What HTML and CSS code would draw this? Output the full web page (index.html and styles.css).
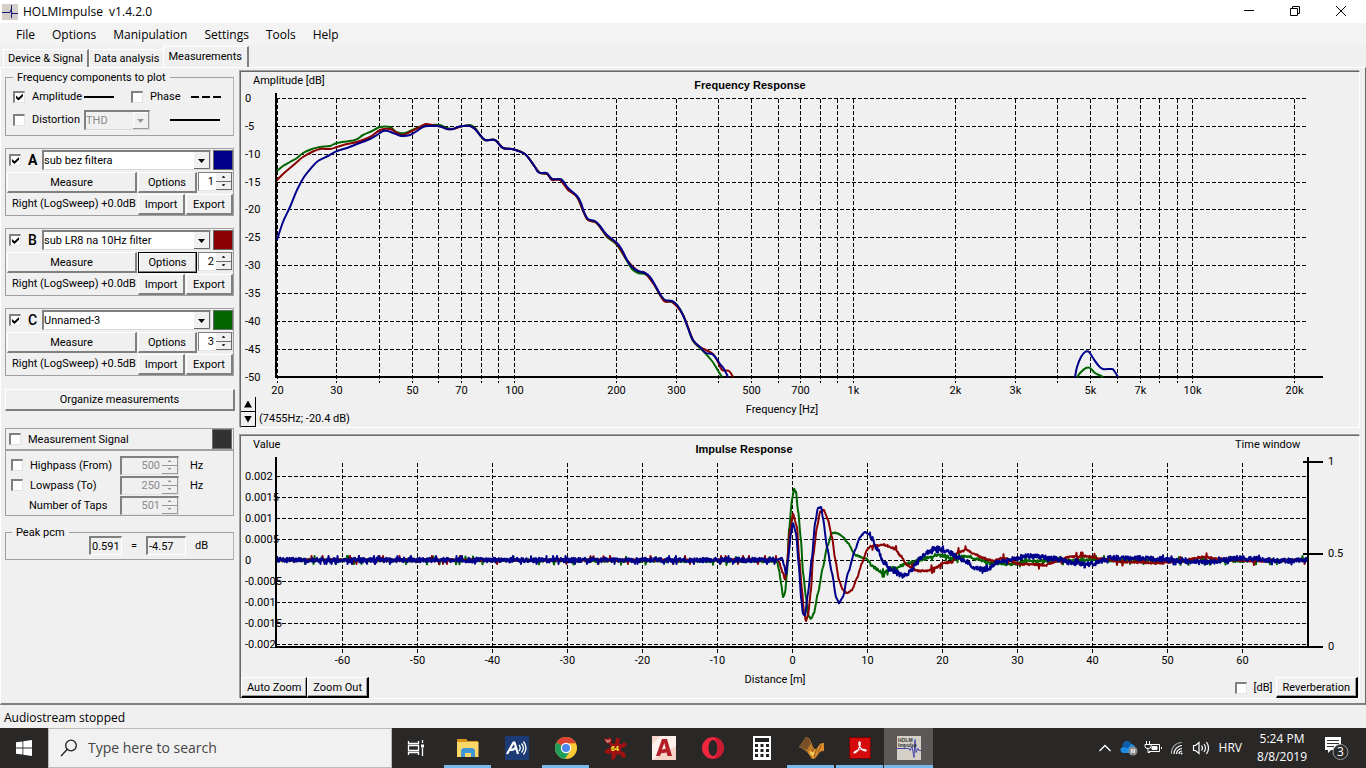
FILE: index.html
```html
<!DOCTYPE html>
<html lang="en">
  <head>
    <meta charset="UTF-8" />
    <meta name="viewport" content="width=device-width, initial-scale=1.0" />
    <title>HOLMImpulse</title>
    <link rel="stylesheet" href="styles.css">
  </head>
  <body>
    <header class="titlebar">
      <svg class="app-icon" width="16" height="16" viewBox="0 0 16 16">
        <rect width="16" height="16" fill="#d4d0c8" />
        <path d="M0 8.5h8l1-3 1 4h6M9.500 1v13" fill="none" stroke="#1a1a80" />
      </svg>
      <span class="title">HOLMImpulse&nbsp; v1.4.2.0</span>
      <button type="button" class="win-btn" aria-label="Minimize">
        <svg width="12" height="12"><path d="M1 4.500h10" stroke="#000" /></svg>
      </button>
      <button type="button" class="win-btn" aria-label="Restore">
        <svg width="12" height="12" fill="none" stroke="#000"><path d="M1.500 2.500h7v7h-7zM3.500 2.500v-2h7v7h-2" /></svg>
      </button>
      <button type="button" class="win-btn" aria-label="Close">
        <svg width="12" height="12"><path d="M1 0l10 10M11 0L1 10" stroke="#000" /></svg>
      </button>
    </header>

    <nav class="menubar">
      <button type="button">File</button>
      <button type="button">Options</button>
      <button type="button">Manipulation</button>
      <button type="button">Settings</button>
      <button type="button">Tools</button>
      <button type="button">Help</button>
    </nav>

    <div class="tabs" role="tablist">
      <button type="button" class="tab" role="tab">Device &amp; Signal</button>
      <button type="button" class="tab" role="tab">Data analysis</button>
      <button type="button" class="tab active" role="tab">Measurements</button>
    </div>

    <main class="page">
      <aside class="sidebar">
        <fieldset class="group components">
          <legend>Frequency components to plot</legend>
          <div class="row">
            <label class="check"><input type="checkbox" checked />Amplitude</label>
            <span class="line short"></span>
            <label class="check phase"><input type="checkbox" />Phase</label>
            <span class="line dashed"></span>
          </div>
          <div class="row">
            <label class="check"><input type="checkbox" />Distortion</label>
            <select class="combo thd" aria-label="Distortion type" disabled><option>THD</option></select>
            <span class="line long"></span>
          </div>
        </fieldset>

        <section class="channel">
          <div class="channel-head">
            <label class="check"><input type="checkbox" checked /><b>A</b></label>
            <select class="combo" aria-label="Measurement A"><option>sub bez filtera</option></select>
            <button type="button" class="swatch blue" aria-label="Color A"></button>
          </div>
          <div class="channel-row">
            <button type="button" class="btn measure">Measure</button>
            <button type="button" class="btn options">Options</button>
            <span class="spin">
              <input type="number" value="1" aria-label="Slot A" />
              <span class="spin-btns"><button type="button" class="up" aria-label="Up"></button><button type="button" class="down" aria-label="Down"></button></span>
            </span>
          </div>
          <div class="channel-row">
            <span class="info">Right (LogSweep) +0.0dB</span>
            <button type="button" class="btn io">Import</button>
            <button type="button" class="btn io">Export</button>
          </div>
        </section>

        <section class="channel">
          <div class="channel-head">
            <label class="check"><input type="checkbox" checked /><span class="letter">B</span></label>
            <select class="combo" aria-label="Measurement B"><option>sub LR8 na 10Hz filter</option></select>
            <button type="button" class="swatch red" aria-label="Color B"></button>
          </div>
          <div class="channel-row">
            <button type="button" class="btn measure">Measure</button>
            <button type="button" class="btn options focused">Options</button>
            <span class="spin">
              <input type="number" value="2" aria-label="Slot B" />
              <span class="spin-btns"><button type="button" class="up" aria-label="Up"></button><button type="button" class="down" aria-label="Down"></button></span>
            </span>
          </div>
          <div class="channel-row">
            <span class="info">Right (LogSweep) +0.0dB</span>
            <button type="button" class="btn io">Import</button>
            <button type="button" class="btn io">Export</button>
          </div>
        </section>

        <section class="channel">
          <div class="channel-head">
            <label class="check"><input type="checkbox" checked /><span class="letter">C</span></label>
            <select class="combo" aria-label="Measurement C"><option>Unnamed-3</option></select>
            <button type="button" class="swatch green" aria-label="Color C"></button>
          </div>
          <div class="channel-row">
            <button type="button" class="btn measure">Measure</button>
            <button type="button" class="btn options">Options</button>
            <span class="spin">
              <input type="number" value="3" aria-label="Slot C" />
              <span class="spin-btns"><button type="button" class="up" aria-label="Up"></button><button type="button" class="down" aria-label="Down"></button></span>
            </span>
          </div>
          <div class="channel-row">
            <span class="info">Right (LogSweep) +0.5dB</span>
            <button type="button" class="btn io">Import</button>
            <button type="button" class="btn io">Export</button>
          </div>
        </section>

        <button type="button" class="btn organize">Organize measurements</button>

        <div class="signal-head">
          <label class="check"><input type="checkbox" />Measurement Signal</label>
          <button type="button" class="swatch dark" aria-label="Signal color"></button>
        </div>
        <div class="filters">
          <div class="filter">
            <label class="check"><input type="checkbox" />Highpass (From)</label>
            <span class="spin off">
              <input type="number" value="500" aria-label="Highpass frequency" disabled />
              <span class="spin-btns"><button type="button" class="up" aria-label="Up" disabled></button><button type="button" class="down" aria-label="Down" disabled></button></span>
            </span>
            <span>Hz</span>
          </div>
          <div class="filter">
            <label class="check"><input type="checkbox" />Lowpass (To)</label>
            <span class="spin off">
              <input type="number" value="250" aria-label="Lowpass frequency" disabled />
              <span class="spin-btns"><button type="button" class="up" aria-label="Up" disabled></button><button type="button" class="down" aria-label="Down" disabled></button></span>
            </span>
            <span>Hz</span>
          </div>
          <div class="filter">
            <label class="taps" for="taps">Number of Taps</label>
            <span class="spin off">
              <input type="number" id="taps" value="501" disabled />
              <span class="spin-btns"><button type="button" class="up" aria-label="Up" disabled></button><button type="button" class="down" aria-label="Down" disabled></button></span>
            </span>
          </div>
        </div>

        <fieldset class="group peak">
          <legend>Peak pcm</legend>
          <div class="peak-row">
            <input type="text" class="peak-lin" value="0.591" aria-label="Peak linear" readonly />
            <span>=</span>
            <input type="text" class="peak-db" value="-4.57" aria-label="Peak dB" readonly />
            <span>dB</span>
          </div>
        </fieldset>
      </aside>

      <div class="charts">
        <section class="panel">
          <svg id="freq-chart" class="chart" viewBox="241 72 1118 325"></svg>
          <div class="freq-bar">
            <span class="zoom-btns">
              <button type="button" class="up" aria-label="Zoom in"></button>
              <button type="button" class="down" aria-label="Zoom out"></button>
            </span>
            <span class="cursor-pos">(7455Hz; -20.4 dB)</span>
          </div>
        </section>
        <section class="panel">
          <svg id="impulse-chart" class="chart" viewBox="241 436 1118 241"></svg>
          <div class="impulse-bar">
            <button type="button" class="btn dark-edge auto">Auto Zoom</button>
            <button type="button" class="btn dark-edge">Zoom Out</button>
            <label class="check db"><input type="checkbox" />[dB]</label>
            <button type="button" class="btn dark-edge reverb">Reverberation</button>
          </div>
        </section>
      </div>
    </main>

    <div class="statusbar">Audiostream stopped</div>

    <footer class="taskbar">
      <button type="button" class="start" aria-label="Start">
        <svg width="16" height="16" fill="#fff"><path d="M0 2.300L6.500 1.400v6.200H0zM7.300 1.300L16 0v7.600H7.300zM0 8.400h6.500v6.200L0 13.700zM7.300 8.400H16V16l-8.700-1.300z" /></svg>
      </button>
      <div class="search">
        <svg width="18" height="18" fill="none" stroke="#222" stroke-width="1.300"><circle cx="11" cy="6.500" r="5.300" /><path d="M7.300 10.300L1 17" /></svg>
        <input type="text" placeholder="Type here to search" aria-label="Search" />
      </div>
      <button type="button" class="task view" aria-label="Task View">
        <svg width="18" height="16" fill="none" stroke="#fff" stroke-width="1.300"><path d="M1.500 1v2.500h10V1M1.500 15v-2.500h10V15M1.500 5.500h10v5h-10zM15.500 0v3M15.500 8v8" /><path d="M14 4.500h3v3h-3z" fill="#fff" stroke="none" /></svg>
      </button>
      <button type="button" class="task open" aria-label="File Explorer">
        <svg width="24" height="24" viewBox="0 0 24 24"><path d="M1 3h9l2 2h10v16H1z" fill="#d9961a" /><path d="M1 6h21.500v15H1z" fill="#fbd768" /><path d="M5 21v-7l2-2h10l2 2v7h-4v-4H9v4z" fill="#4096d4" /></svg>
      </button>
      <button type="button" class="task" aria-label="Audio tool">
        <svg width="24" height="24" viewBox="0 0 24 24"><rect width="24" height="24" fill="#1c3b74" /><g fill="none" stroke="#fff"><path d="M2 18L8.500 6.500h1L13 18M5 14c3 0 5-1 6-3" stroke-width="2.200" /><path d="M14 9q2.500 3 0 6M16.500 7.500q4 4.500 0 9M18.500 5.500q5 6.500 0 13" stroke-width="1.300" /></g></svg>
      </button>
      <button type="button" class="task open" aria-label="Chrome">
        <svg width="24" height="24" viewBox="0 0 24 24"><circle cx="12" cy="12" r="11" fill="#fbc935" /><path d="M12 12L2.500 6.500A11 11 0 0 1 21.900 7.200H12z" fill="#dd4236" /><path d="M12 12L2.500 6.500A11 11 0 0 0 11 23l5.200-8.600z" fill="#1f9d59" /><circle cx="12" cy="12" r="5.200" fill="#fff" /><circle cx="12" cy="12" r="4" fill="#4a86ec" /></svg>
      </button>
      <button type="button" class="task" aria-label="Irfan 64">
        <svg width="24" height="24" viewBox="0 0 24 24"><path d="M1 2l3 1 3-2 2 3-1 3 4 1 1-6h3l1 2-1 4h3l2-2 3 2-2 3-4 1v3l4 2 1 4-3 1-4-4-3 1-1 4-3 1-1-3 1-4-3 1-4-1v-3l6-3-2-3-4-2z" fill="#9c1111" /><path d="M2 3l3 1 3-1-1 3-3 1z" fill="#c9827c" /><text x="12" y="15" class="badge64">64</text></svg>
      </button>
      <button type="button" class="task" aria-label="AutoCAD">
        <svg width="24" height="24" viewBox="0 0 24 24"><rect width="24" height="24" fill="#fbf0ec" /><path d="M0 8l9-8H0zM0 24h24V10z" fill="#f5d3c8" /><path d="M4 20L10 3h5l5 17h-4.500l-1-3.500-5.500 1L8 20zM10 13.500l3.700-.8L12.300 7z" fill="#b51e27" /></svg>
      </button>
      <button type="button" class="task" aria-label="Opera">
        <svg width="24" height="24" viewBox="0 0 24 24"><circle cx="12" cy="12" r="11" fill="#f0263c" /><path d="M12 1a11 11 0 0 1 0 22c7-3 7-19 0-22z" fill="#a70d24" fill-opacity=".5" /><ellipse cx="12" cy="12" rx="4.500" ry="8" fill="#292827" /></svg>
      </button>
      <button type="button" class="task" aria-label="Calculator">
        <svg width="18" height="24" viewBox="0 0 18 24"><rect width="18" height="24" fill="#fff" /><path d="M2 2h14v4H2z" fill="#222" /><path d="M2 9.500h14M2 14.500h14M2 19.500h14" stroke="#222" stroke-width="3" stroke-dasharray="3 2.500" /></svg>
      </button>
      <button type="button" class="task open" aria-label="Signal plot">
        <svg width="26" height="24" viewBox="0 0 26 24"><path d="M1 11L8 1l3 1c3 4 4 12 7 11 2-1 3-7 8-6v8c-4 0-5 2-7 5-3 4-5 4-7 0-3-5-6-7-11-9z" fill="#d98a2c" /><path d="M1 11L8 1l3 1 2 5-4 7z" fill="#76522e" /><path d="M3 9l7 7M5 7l7 8M7 4l7 11M9 2l7 12M15 13l-2 8M19 12l-3 9M23 9l-3 8" stroke="#7d4b1b" stroke-width=".7" fill="none" /><path d="M12 13c1 4 3 4 5 2l-2 6-3-3z" fill="#f3ca4f" /></svg>
      </button>
      <button type="button" class="task open" aria-label="Acrobat Reader">
        <svg width="22" height="22" viewBox="0 0 22 22"><rect width="22" height="22" rx="1" fill="#710608" /><rect x="1" y="1" width="20" height="20" fill="#d30b0d" /><path d="M5 16c-1-2 9-5 12-3 1 2-4 1-6-3-2-3-1-6 0-5 1 2-2 11-6 11z" fill="none" stroke="#fff" stroke-width="1.200" /></svg>
      </button>
      <button type="button" class="task open current" aria-label="HOLMImpulse">
        <svg width="24" height="24" viewBox="0 0 24 24"><rect width="24" height="24" fill="#d4d0c8" /><path d="M0 12.500h12l1 2 2-4 2 11 1-18 1 13 2-4 1 2h2" fill="none" stroke="#4545a8" /><text x="1" y="6" class="holm">HOLM</text><text x="1" y="11" class="holm">Impulse</text></svg>
      </button>

      <div class="tray">
        <svg width="24" height="20"><path d="M6.500 13l5.500-5.500 5.500 5.500" fill="none" stroke="#fff" stroke-width="1.300" /></svg>
        <svg width="24" height="20"><path d="M7 15a3 3 0 0 1-1-6 4 4 0 0 1 8-3 4 4 0 0 1 4 5v4z" fill="#1a8ae2" /><path d="M6 9a4 4 0 0 1 8-3l-3 4z" fill="#0a5ba8" /><circle cx="16" cy="13" r="4.500" fill="#8c8c8c" /><path d="M14.800 11v4M17.200 11v4" stroke="#fff" stroke-width="1.300" /></svg>
        <svg width="24" height="20" fill="none" stroke="#fff"><path d="M10 6.500h8.500v7H8M20.500 9v2M5.500 3v3M8.500 3v3M4 6.500h6v2q0 2-3 2t-3-2zM7 11v3.500h2" /><path d="M11 8.500h5v3h-5z" fill="#fff" /></svg>
        <svg width="24" height="20" fill="none" stroke="#fff" stroke-width="1.200"><path d="M6.500 16A10.500 10.500 0 0 1 17 4.500" opacity=".6" /><path d="M9 16a8.500 8.500 0 0 1 8-8.500M11.500 16a6 6 0 0 1 5.500-5.500M14 16a3 3 0 0 1 3-3" /><circle cx="16.500" cy="15.500" r="1" fill="#fff" stroke="none" /></svg>
        <svg width="24" height="20" fill="none" stroke="#fff" stroke-width="1.200"><path d="M4.500 7.500h2l3.500-3v11l-3.500-3h-2zM12.500 7.500q2 2.500 0 5M15 6q3 4 0 8M17.500 4q4 6 0 12" /></svg>
        <span class="lang">HRV</span>
        <div class="clock"><span>5:24 PM</span><span>8/8/2019</span></div>
        <svg class="notify" width="26" height="26" viewBox="0 0 26 26"><path d="M1 2h16v13H7l-3 3v-3H1z" fill="#fff" /><path d="M3 5.500h12M3 8.500h12M3 11.500h7" stroke="#333" /><circle cx="16.500" cy="17" r="7.500" fill="#2b2a2a" stroke="#999" /><text x="16.500" y="21">3</text></svg>
      </div>
    </footer>

    <script src="script.js"></script>
  </body>
</html>
```

FILE: styles.css
```css
* {
  box-sizing: border-box;
}
body {
  margin: 0;
  min-height: 100vh;
  display: flex;
  flex-direction: column;
  background: #f0f0f0;
  color: #000;
  font: 11px/13px Roboto, "Liberation Sans", sans-serif;
}
button,
input,
select {
  font: inherit;
  color: inherit;
  margin: 0;
  padding: 0;
  border: none;
  border-radius: 0;
  background: none;
}
svg {
  flex: none;
}

/* title, menu, tabs */
.titlebar {
  display: flex;
  align-items: center;
  height: 23px;
  padding: 0 2px;
  background: #fff;
  font: 12px/16px "Open Sans", "Noto Sans", sans-serif;
}
.title {
  flex: 1;
  margin-left: 5px;
}
.win-btn {
  display: flex;
  justify-content: center;
  align-items: center;
  width: 46px;
  height: 22px;
}
.menubar {
  display: flex;
  gap: 1px;
  height: 23px;
  padding: 0 8px;
  background: #f3f3f3;
  font: 12px/16px "Open Sans", "Noto Sans", sans-serif;
}
.menubar button {
  padding: 0 8px;
}
.tabs {
  display: flex;
  align-items: flex-end;
  height: 21px;
  padding: 0 3px;
}
.tab {
  height: 18px;
  padding: 0 4px;
  white-space: nowrap;
  border-left: 1px solid #fff;
  border-top: 1px solid #fff;
  border-right: 2px solid #808080;
}
.tab + .tab {
  border-right-width: 0;
}
.tab.active {
  height: 21px;
  padding: 0 5px 2px 4px;
  border-right: 2px solid #808080;
}

/* page */
.page {
  flex: 1;
  display: flex;
  border: 1px solid #fff;
  border-right: 1px solid #696969;
  border-bottom: 2px solid #808080;
}
.sidebar {
  flex: none;
  display: flex;
  flex-direction: column;
  width: 239px;
  padding: 3px 6px 0 4px;
}
.group {
  margin: 0;
  border: 1px solid #a0a0a0;
  border-right-color: #b0b0b0;
}
.group legend {
  padding: 0 4px;
}
.components {
  height: 65px;
  padding: 1px 7px;
}
.row {
  display: flex;
  align-items: center;
  height: 23px;
}
.check {
  display: flex;
  align-items: center;
  gap: 7px;
  white-space: nowrap;
}
.row .check {
  width: 71px;
}
.row .phase {
  width: 60px;
  margin-left: 17px;
}
.check input {
  appearance: none;
  flex: none;
  display: grid;
  place-items: center;
  width: 12px;
  height: 12px;
  background: #fff;
  border: 1px solid #808080;
  border-top-width: 2px;
  border-left-width: 2px;
  border-right-color: #e3e3e3;
  border-bottom-color: #e3e3e3;
}
.check input:checked::before {
  content: "";
  width: 7px;
  height: 7px;
  background: #000;
  clip-path: polygon(0 28%, 36% 60%, 100% 0, 100% 40%, 36% 100%, 0 68%);
}
.line {
  height: 2px;
  background: #000;
}
.short {
  width: 30px;
}
.long {
  width: 50px;
  margin-left: 20px;
}
.dashed {
  width: 30px;
  background: repeating-linear-gradient(90deg, #000 0 8px, transparent 8px 11px);
}
.combo {
  appearance: none;
  flex: 1;
  min-width: 0;
  height: 20px;
  border: 2px solid #808080;
  border-right: 1px solid #d8d8d8;
  border-bottom: 1px solid #d8d8d8;
  background: #fff url("data:image/svg+xml,%3Csvg xmlns='http://www.w3.org/2000/svg' width='16' height='17'%3E%3Cpath fill='%23f0f0f0' d='M0 0h16v17H0z'/%3E%3Cpath d='M15.500 0v16.500H0' fill='none' stroke='%23696969'/%3E%3Cpath d='M4 7h7l-3.500 4z'/%3E%3C/svg%3E") right top no-repeat;
}
.thd {
  flex: none;
  width: 66px;
  color: #8a8a8a;
  opacity: 1;
  background: #f0f0f0 url("data:image/svg+xml,%3Csvg xmlns='http://www.w3.org/2000/svg' width='16' height='17'%3E%3Cpath fill='%23f0f0f0' d='M0 0h16v17H0z'/%3E%3Cpath d='M.5 17V.5H16' fill='none' stroke='%23fff'/%3E%3Cpath d='M15.500 0v16.500H0' fill='none' stroke='%23999'/%3E%3Cpath fill='%23999' d='M4 7h7l-3.500 4z'/%3E%3C/svg%3E") right top no-repeat;
}

/* measurement channels */
.channel {
  display: flex;
  flex-direction: column;
  gap: 1px;
  height: 68px;
  margin-top: 12px;
  padding: 1px 0 0 1px;
  border: 1px solid #a0a0a0;
}
.channel-head {
  display: flex;
  gap: 2px;
  height: 21px;
}
.channel-head .check {
  width: 33px;
  height: 20px;
  padding-left: 2px;
}
.channel-head b,
.letter {
  font-size: 14px;
}
.letter {
  font-weight: 500;
}
.swatch {
  width: 20px;
  height: 20px;
  border: 1px solid #696969;
}
.blue {
  background: #00008b;
}
.red {
  background: #8b0000;
}
.green {
  background: #006400;
}
.dark {
  background: #323232;
}
.channel-row {
  display: flex;
  gap: 1px;
  height: 21px;
}
.btn {
  border: 1px solid #fff;
  border-right: 2px solid #808080;
  border-bottom: 2px solid #808080;
  background: #f0f0f0;
  white-space: nowrap;
}
.measure {
  flex: 1;
}
.options {
  width: 59px;
}
.focused {
  border: 1px solid #000;
  box-shadow: inset -1px -1px 0 #808080, inset 1px 1px 0 #fff;
}
.info {
  flex: 1;
  padding: 3px 0 0 5px;
  white-space: nowrap;
}
.io {
  width: 47px;
}
.spin {
  display: flex;
  width: 35px;
  height: 19px;
  background: #fff;
  border: 1px solid #808080;
  border-right-color: #e3e3e3;
  border-bottom-color: #e3e3e3;
}
.spin input {
  appearance: textfield;
  flex: 1;
  min-width: 0;
  text-align: right;
}
.spin input::-webkit-inner-spin-button {
  appearance: none;
}
.spin-btns {
  display: flex;
  flex-direction: column;
  width: 16px;
  margin-left: 2px;
}
.spin-btns button {
  flex: 1;
  display: grid;
  place-items: center;
  background: #f0f0f0;
  border-right: 1px solid #696969;
  border-bottom: 1px solid #696969;
}
.up::before,
.down::before {
  content: "";
  width: 4px;
  height: 2px;
  background: currentColor;
  clip-path: polygon(50% 0, 100% 100%, 0 100%);
}
.down::before {
  clip-path: polygon(0 0, 100% 0, 50% 100%);
}
.organize {
  height: 22px;
  margin: 13px -1px 17px 0;
}

/* measurement signal */
.signal-head {
  display: flex;
  justify-content: space-between;
  height: 22px;
  padding: 0 1px 0 3px;
  border: 1px solid #a0a0a0;
}
.filters {
  height: 66px;
  padding: 4px 5px 0 5px;
  border: 1px solid #a0a0a0;
}
.filter {
  display: flex;
  align-items: center;
  height: 20px;
}
.filter .check,
.taps {
  width: 109px;
}
.taps {
  padding-left: 18px;
}
.off {
  width: 59px;
  height: 19px;
  margin-right: 11px;
  color: #8a8a8a;
  background: #f0f0f0;
  border-top-width: 2px;
  border-left-width: 2px;
}
.off button {
  border-color: #999;
}
.peak {
  height: 34px;
  margin-top: 10px;
  padding: 0;
}
.peak legend {
  margin-left: 6px;
}
.peak-row {
  display: flex;
  align-items: center;
  gap: 9px;
  margin: -3px 0 0 83px;
}
.peak-row input {
  height: 19px;
  padding-left: 1px;
  border: 1px solid #fff;
  border-top: 2px solid #808080;
  border-left: 2px solid #808080;
}
.peak-lin {
  width: 33px;
}
.peak-db {
  width: 40px;
}

/* charts */
.charts {
  flex: 1;
  display: flex;
  flex-direction: column;
  gap: 7px;
  min-width: 0;
  padding: 3px 5px 0 0;
}
.panel {
  border: 1px solid #696969;
  border-right-color: #fff;
  border-bottom-color: #fff;
  box-shadow: -1px -1px 0 #a0a0a0;
}
.chart {
  display: block;
  width: 100%;
  height: auto;
  overflow: visible;
  font-size: 11px;
}
.chart .heading {
  font-family: "Liberation Sans", Arial, sans-serif;
  font-weight: bold;
}
.chart .mid {
  text-anchor: middle;
}
.grid {
  stroke: #000;
  stroke-dasharray: 4 2;
}
.axis {
  stroke: #000;
  stroke-width: 2;
}
.trace {
  fill: none;
  stroke-width: 2;
  stroke-linejoin: round;
}
.trace.a {
  stroke: #00008b;
}
.trace.b {
  stroke: #8b0000;
}
.trace.c {
  stroke: #006400;
}
.freq-bar {
  display: flex;
  gap: 3px;
}
.zoom-btns {
  display: flex;
  flex-direction: column;
}
.zoom-btns button {
  display: grid;
  place-items: center;
  width: 15px;
  height: 15px;
  border-right: 1px solid #000;
  border-bottom: 1px solid #000;
}
.zoom-btns button::before {
  width: 8px;
  height: 7px;
}
.cursor-pos {
  padding-top: 15px;
}
.impulse-bar {
  display: flex;
}
.dark-edge {
  height: 21px;
  padding: 1px 5px 0;
  border-right-color: #000;
  border-bottom-color: #000;
  box-shadow: inset -1px -1px 0 #a0a0a0;
}
.impulse-bar .auto {
  border-right-width: 1px;
}
.db {
  margin: 0 3px 0 auto;
}
.impulse-bar .reverb {
  margin-right: 1px;
  padding: 1px 6px 0;
}

.statusbar {
  height: 23px;
  padding: 5px 4px 2px;
  font: 12px/16px "Open Sans", "Noto Sans", sans-serif;
}

/* taskbar */
.taskbar {
  display: flex;
  height: 40px;
  background: #292827;
  color: #fff;
  font: 12px/18px "Open Sans", "Noto Sans", sans-serif;
}
.start {
  display: grid;
  place-items: center;
  width: 48px;
}
.search {
  display: flex;
  align-items: center;
  gap: 10px;
  width: 344px;
  padding-left: 11px;
  background: #f1f1f1;
  border: 1px solid #bbb;
  color: #333;
}
.search input {
  flex: 1;
  font-size: 14px;
}
.search input::placeholder {
  color: #444;
  opacity: 1;
}
.task {
  display: flex;
  justify-content: center;
  align-items: center;
  width: 49px;
  padding-top: 3px;
  border-bottom: 3px solid transparent;
}
.view {
  width: 48px;
  margin-right: 3px;
}
.open {
  border-image: linear-gradient(90deg, transparent 4px, #76b9ed 4px 45px, transparent 45px) 3;
}
.current {
  background: #5a5958;
  border-image: none;
  border-bottom-color: #76b9ed;
}
.badge64 {
  fill: #ff3;
  font: bold 7px "Liberation Sans", sans-serif;
  text-anchor: middle;
}
.holm {
  fill: #333;
  font: bold 5px "Liberation Sans", sans-serif;
}
.tray {
  display: flex;
  align-items: center;
  margin-left: auto;
  padding-right: 16px;
}
.lang {
  margin: 0 15px 0 6px;
}
.clock {
  display: flex;
  flex-direction: column;
  align-items: center;
  margin-right: 17px;
}
.notify text {
  fill: #fff;
  font-size: 12px;
  text-anchor: middle;
}
```

FILE: script.js
```js
const SVG_NS = "http://www.w3.org/2000/svg";

function add(parent, tag, attrs, text) {
  const el = document.createElementNS(SVG_NS, tag);
  for (const key in attrs) el.setAttribute(key, attrs[key]);
  if (text !== undefined) el.textContent = text;
  parent.appendChild(el);
}

function line(svg, cls, x1, y1, x2, y2) {
  add(svg, "path", { class: cls, d: `M${x1} ${y1}L${x2} ${y2}` });
}

function label(svg, cls, x, y, text) {
  add(svg, "text", { class: cls, x, y }, text);
}

function parse(str) {
  return str.trim().split(/\s+/).map((p) => p.split(",").map(Number));
}

// Smooth curve through the points
function curve(svg, cls, str) {
  const p = parse(str);
  let d = `M${p[0]}`;
  for (let i = 0; i < p.length - 1; i++) {
    const a = p[i - 1] || p[i];
    const b = p[i];
    const c = p[i + 1];
    const e = p[i + 2] || c;
    d += `C${b[0] + (c[0] - a[0]) / 6} ${b[1] + (c[1] - a[1]) / 6} ${c[0] - (e[0] - b[0]) / 6} ${c[1] - (e[1] - b[1]) / 6} ${c}`;
  }
  add(svg, "path", { class: "trace " + cls, d });
}

// Impulse trace: interpolated points plus measurement noise
function noisy(svg, cls, str, seed, level) {
  const p = parse(str);
  let d = "";
  let i = 0;
  for (let x = p[0][0]; x <= 1307; x += 0.5) {
    while (i < p.length - 2 && x > p[i + 1][0]) i++;
    const [x1, y1] = p[i];
    const [x2, y2] = p[i + 1];
    const t = (x - x1) / (x2 - x1);
    const y = y1 + (y2 - y1) * (t * t * (3 - 2 * t) + t) / 2;
    seed = (seed * 16807) % 2147483647;
    const r = seed / 2147483647 - 0.5;
    const steep = x > 776 && x < 870;
    const amp = steep ? 1 : Math.abs(r) > 0.48 ? 8 : level;
    d += `${d ? "L" : "M"}${x} ${(y + r * amp).toFixed(1)}`;
  }
  add(svg, "path", { class: "trace " + cls, d });
}

function drawFrequency() {
  const svg = document.querySelector("#freq-chart");
  const fx = (f) => Math.round(276.5 + Math.log10(f / 20) * 339.3) + 0.5;
  const names = { 20: "20", 30: "30", 50: "50", 70: "70", 100: "100", 200: "200", 300: "300", 500: "500", 700: "700",
    1000: "1k", 2000: "2k", 3000: "3k", 5000: "5k", 7000: "7k", 10000: "10k", 20000: "20k" };

  for (let i = 0; i <= 10; i++) {
    const y = Math.round(98 + i * 27.85) + 0.5;
    if (i < 10) line(svg, "grid", 276, y, 1307, y);
    label(svg, "", 245, y + 3, String(-5 * i || 0));
  }
  for (let dec = 10; dec <= 10000; dec *= 10) {
    for (let n = 1; n < 10; n++) {
      const f = n * dec;
      if (f < 20 || f > 20000) continue;
      line(svg, "grid", fx(f), 99, fx(f), 383);
      if (names[f]) label(svg, "mid", fx(f), 394, names[f]);
    }
  }
  line(svg, "axis", 276, 93, 276, 378);
  line(svg, "axis", 275, 377, 1323, 377);
  label(svg, "", 253, 84, "Amplitude [dB]");
  label(svg, "heading mid", 750, 89, "Frequency Response");
  label(svg, "mid", 782, 413, "Frequency [Hz]");

  curve(svg, "c", `277,171 283,166 290,162 297,158 303,153 312,149 320,147 330,146 337,143 355,140 363,135 372,131
    380,127 390,127 395,131 400,133 405,133 410,131 422,126 430,125 440,125 447,128 453,129 458,127 463,126 470,125
    475,128 480,135 485,140 495,140 503,148 512,149 525,154 535,167 540,173 547,174 552,179 560,180 568,189 577,197
    584,213 588,220 595,222 600,227 607,237 617,245 627,261 632,269 638,273 645,274 650,278 655,286 660,295 665,301
    672,302 677,305 683,315 688,328 693,341 700,348 705,353 712,361 717,369 722,377`);
  curve(svg, "b", `277,180 283,174 290,168 297,162 303,157 312,152 320,149 330,149 337,147 347,144 357,142 370,137
    380,130 390,129 397,133 403,135 412,131 420,127 426,124 432,125 442,127 447,129 453,129 463,126 470,126 475,129
    480,135 485,140 495,140 503,148 512,149 525,154 535,167 540,173 547,174 552,180 560,180 568,190 577,197 584,213
    588,220 595,222 600,227 607,236 617,244 627,260 638,271 645,273 655,286 664,301 672,302 683,315 693,340 700,347
    706,350 713,354 718,362 722,370 729,371 733,377`);
  curve(svg, "a", `277,240 283,222 290,207 297,190 304,177 312,167 318,161 328,156 337,151 347,148 357,144 370,139
    377,135 383,131 388,131 393,133 398,135 403,136 410,135 417,131 423,127 430,126 437,126 442,127 447,129 453,129
    458,127 463,126 470,126 475,129 480,135 485,140 490,140 495,140 498,143 503,148 512,149 518,151 525,154 530,160
    535,167 538,172 542,173 547,173 552,179 560,179 563,181 568,188 577,196 581,203 584,212 588,219 595,221 600,226
    607,235 617,243 622,250 627,260 632,267 638,271 645,273 650,277 655,285 660,294 665,300 672,301 677,305 683,315
    688,328 693,340 700,347 706,353 712,354 716,358 720,364 724,369 728,377`);
  curve(svg, "c", "1077,377 1081,372 1086,368 1090,368 1095,373 1099,375 1103,377");
  curve(svg, "a", "1075,377 1077,367 1081,357 1085,352 1089,352 1093,358 1098,365 1103,369 1112,369 1115,372 1118,377");
}

function drawImpulse() {
  const svg = document.querySelector("#impulse-chart");
  const values = ["0.002", "0.0015", "0.001", "0.0005", "0", "-0.0005", "-0.001", "-0.0015", "-0.002"];

  values.forEach((v, i) => {
    const y = 476.5 + i * 21;
    line(svg, "grid", 276, y, 1307, y);
    label(svg, "", 245, y + 3, v);
  });
  for (let m = -60; m <= 60; m += 10) {
    const x = 792.5 + m * 7.5;
    line(svg, "grid", x, 463, x, 653);
    label(svg, "mid", x, 664, String(m));
  }

  noisy(svg, "c", `277,560 777,561 779,570 781,583 783,597 785,593 787,573 789,530 792,500 794,489 796,492 798,510
    801,540 803,573 806,597 808,615 811,619 814,613 818,593 823,567 827,547 832,533 837,533 842,536 848,543 855,555
    867,559 873,567 883,573 893,568 907,564 920,560 937,555 945,556 953,559 967,556 977,559 990,563 1013,564 1027,561
    1040,561 1087,560 1130,560 1190,561 1307,560`, 4711, 3);
  noisy(svg, "b", `277,560 778,560 783,573 785,580 787,563 790,530 793,514 797,527 799,557 802,590 804,613 806,621
    808,615 811,590 813,557 817,527 820,512 824,510 828,520 832,537 835,558 839,580 843,590 847,593 852,590 857,578
    862,563 867,550 871,546 885,545 895,549 900,555 907,565 917,571 927,571 937,567 943,563 952,562 958,552 967,550
    973,553 983,558 993,561 1003,558 1020,564 1047,565 1053,562 1070,557 1087,556 1100,559 1127,562 1160,563 1180,561
    1203,557 1220,559 1253,561 1307,560`, 1234, 2);
  noisy(svg, "a", `277,560 777,560 782,558 784,565 786,574 788,560 791,533 793,523 796,533 799,567 801,597 803,614
    805,615 808,593 812,557 815,523 818,508 821,507 823,518 827,547 832,573 836,597 839,603 843,597 848,573 855,550
    860,537 865,532 870,535 877,548 883,562 893,571 903,576 910,572 920,558 927,552 935,548 947,551 957,557 967,562
    975,569 988,569 997,562 1007,560 1027,556 1040,557 1060,559 1070,563 1093,564 1110,558 1130,558 1160,559 1187,562
    1213,562 1237,558 1253,559 1280,561 1307,560`, 987, 5);

  line(svg, "axis", 276, 457, 276, 648);
  line(svg, "axis", 275, 647, 1323, 647);
  line(svg, "axis", 1308, 457, 1308, 648);
  line(svg, "axis", 1303, 462, 1323, 462);
  line(svg, "axis", 1303, 554, 1323, 554);
  label(svg, "", 1328, 465, "1");
  label(svg, "", 1328, 557, "0.5");
  label(svg, "", 1328, 650, "0");
  label(svg, "", 253, 448, "Value");
  label(svg, "", 1235, 448, "Time window");
  label(svg, "heading mid", 744, 453, "Impulse Response");
  label(svg, "mid", 775, 683, "Distance [m]");
}

drawFrequency();
drawImpulse();
```
